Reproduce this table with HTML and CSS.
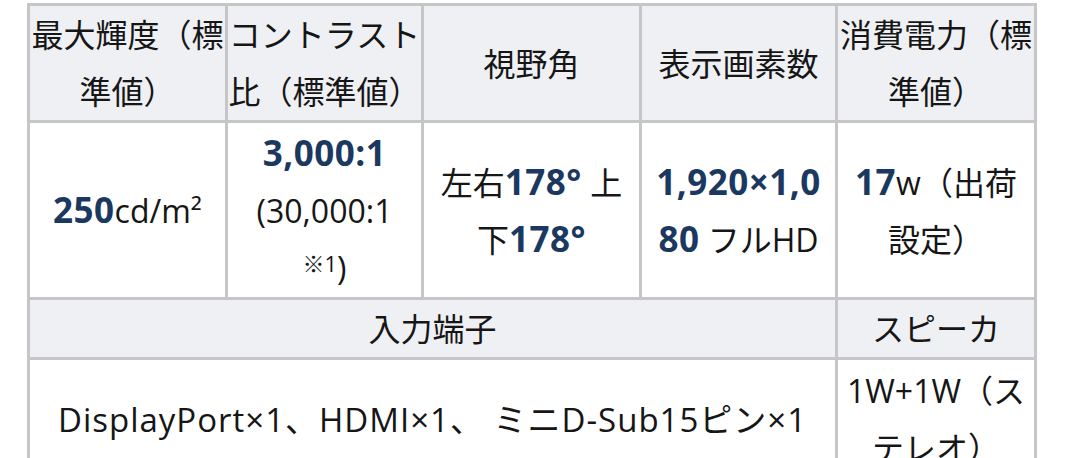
FILE: index.html
```html
<!DOCTYPE html>
<html lang="ja">
<head>
<meta charset="utf-8">
<link rel="stylesheet" href="styles.css">
</head>
<body>
<table class="spec">
  <colgroup>
    <col class="c1"><col class="c2"><col class="c3"><col class="c4"><col class="c5">
  </colgroup>
  <tr>
    <th>最大輝度（標準値）</th>
    <th>コントラスト比（標準値）</th>
    <th>視野角</th>
    <th>表示画素数</th>
    <th>消費電力（標準値）</th>
  </tr>
  <tr>
    <td><span class="num">250</span>cd/m²</td>
    <td><span class="num">3,000:1</span><br>(30,000:1<br><span class="note">※1</span>)</td>
    <td>左右<span class="num">178°</span> 上<br>下<span class="num">178°</span></td>
    <td><span class="num">1,920×1,0<br>80</span> フルHD</td>
    <td><span class="num">17</span>w（出荷<br>設定）</td>
  </tr>
  <tr>
    <th colspan="4">入力端子</th>
    <th>スピーカ</th>
  </tr>
  <tr>
    <td colspan="4" class="ports">DisplayPort×1、HDMI×1、 ミニD-Sub15ピン×1</td>
    <td>1W+1W（ステレオ）</td>
  </tr>
</table>
</body>
</html>
```

FILE: styles.css
```css
html, body {
  margin: 0;
  background: #ffffff;
}
body {
  padding: 3px 0 0 27px;
  font-family: "Open Sans", "Noto Sans CJK JP", sans-serif;
  color: #161616;
}
.spec {
  border-collapse: collapse;
  table-layout: fixed;
  width: 1009px;
  font-size: 32px;
  line-height: 57px;
}
.c1 { width: 198px; }
.c2 { width: 196px; }
.c3 { width: 218px; }
.c4 { width: 196px; }
.c5 { width: 199px; }
.spec th, .spec td {
  border: 3px solid #c6c6c8;
  padding: 0;
  text-align: center;
  vertical-align: middle;
  font-weight: 400;
  overflow-wrap: anywhere;
}
.spec th {
  background: #eff0f4;
}
.spec td {
  background: #ffffff;
  padding-top: 2px;
  padding-bottom: 1px;
}
.spec td.ports {
  font-size: 33px;
  letter-spacing: 1px;
}
.num {
  color: #1b3860;
  font-weight: 700;
  font-size: 35px;
  letter-spacing: 0.5px;
  line-height: 50px;
}
.note {
  font-size: 22px;
  vertical-align: 8px;
  line-height: 0;
}
```
